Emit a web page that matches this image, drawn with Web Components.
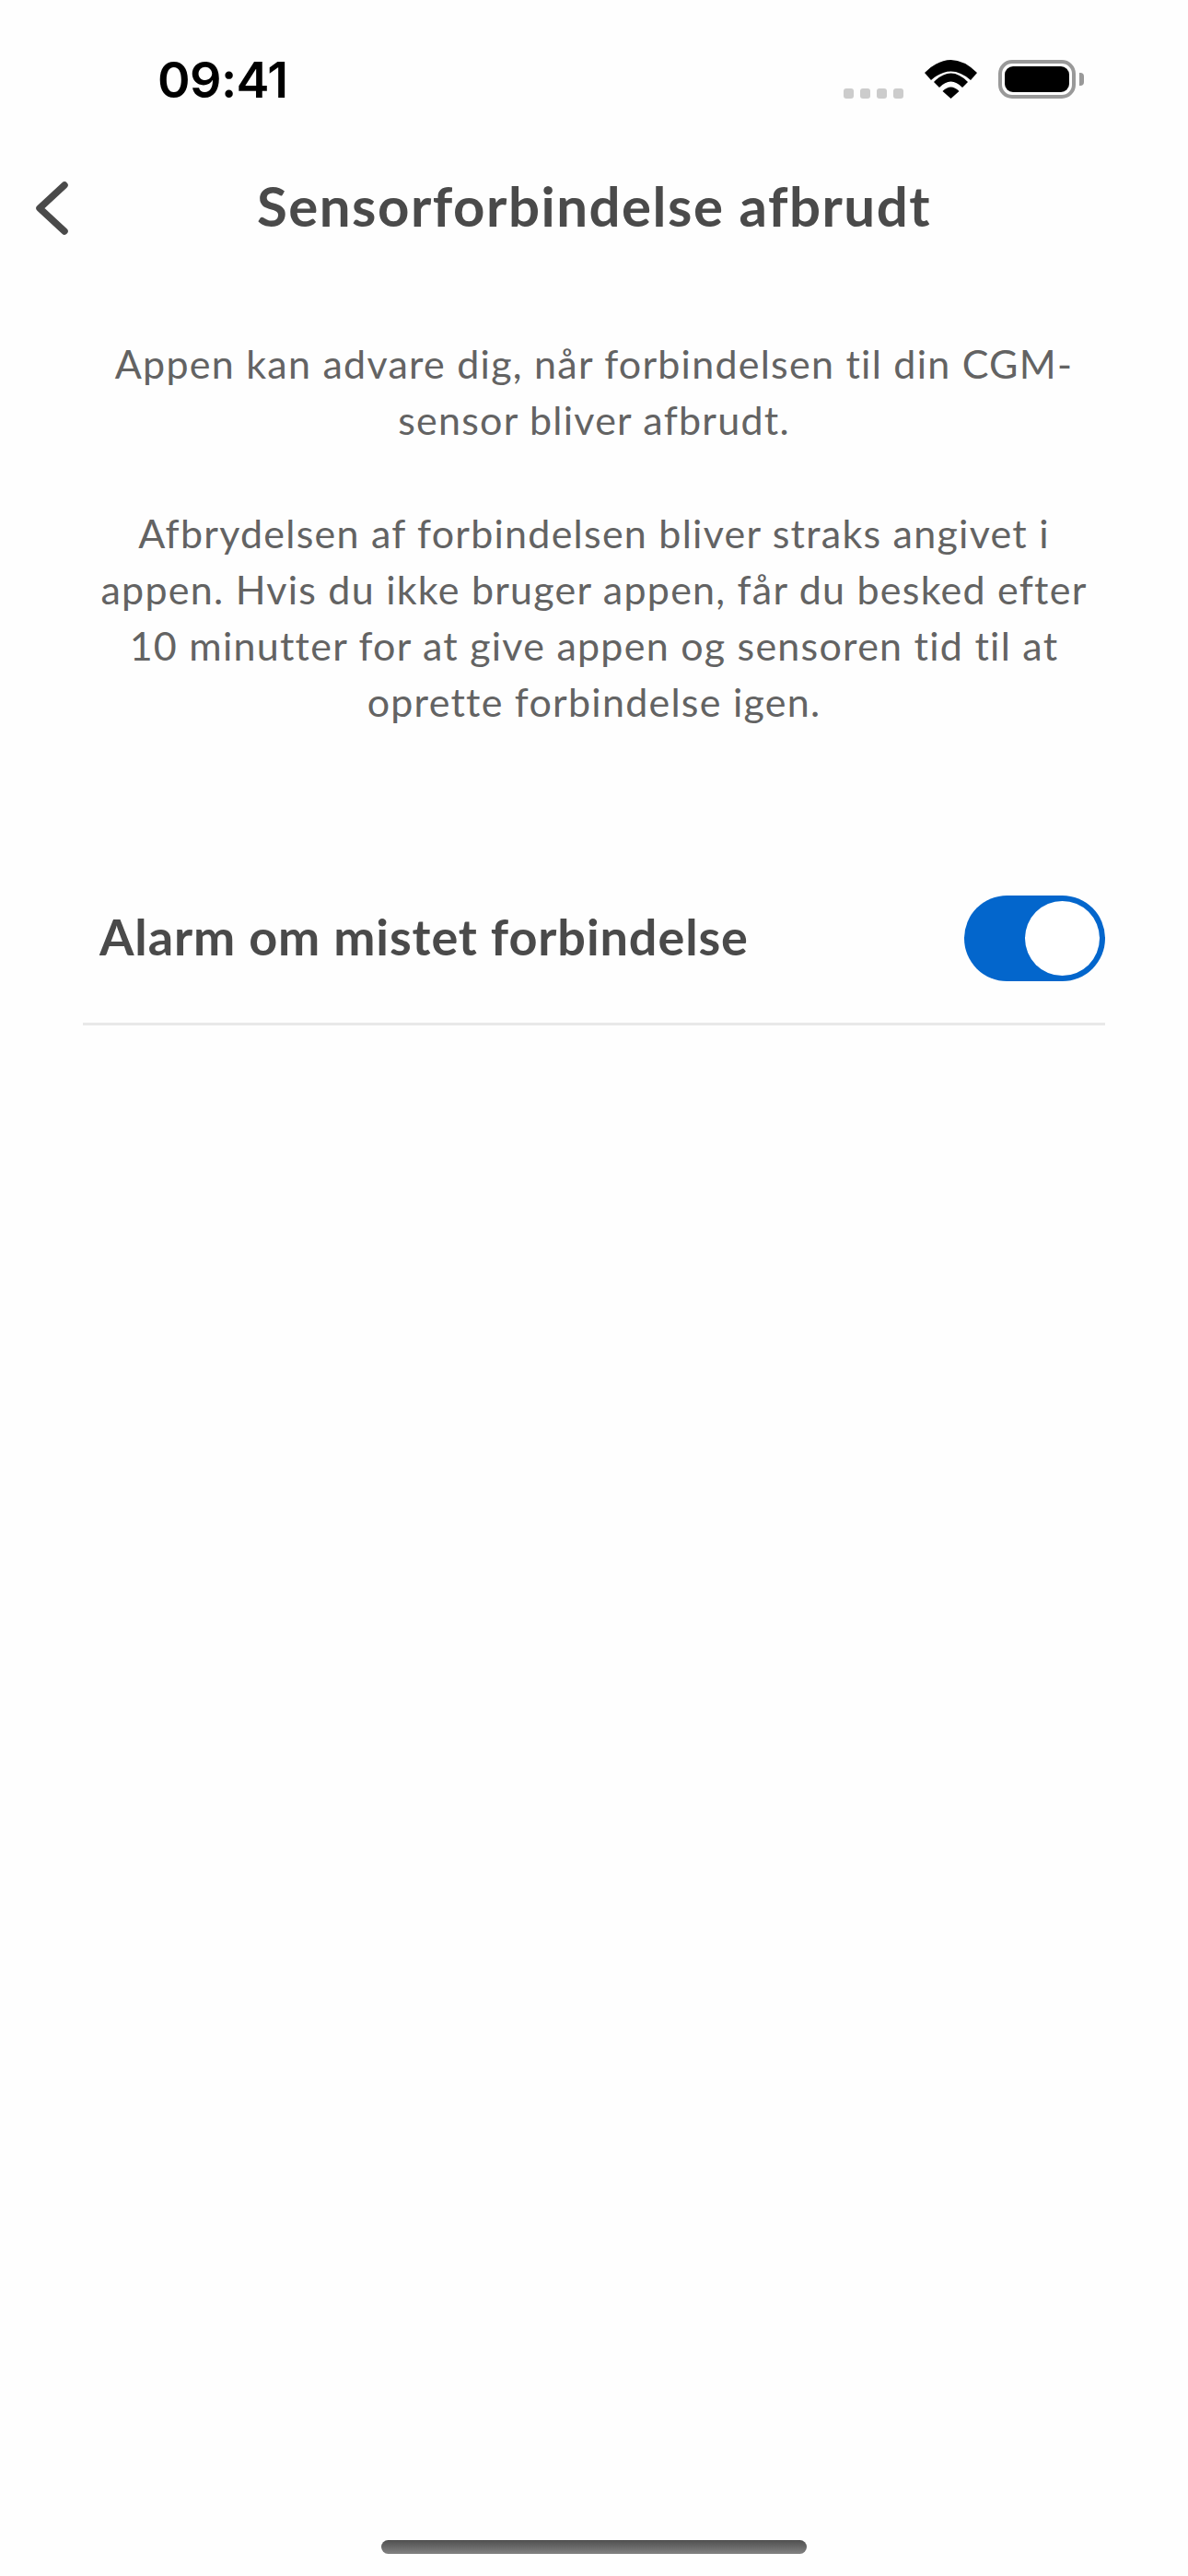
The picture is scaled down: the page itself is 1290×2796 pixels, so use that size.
<!DOCTYPE html>
<html lang="da">
<head>
<meta charset="utf-8">
<title>Sensorforbindelse afbrudt</title>
<style>
  html, body { margin: 0; padding: 0; background: #fefefe; }
  body { font-family: "Lato", "Noto Sans", sans-serif; }
</style>
</head>
<body>

<app-screen>
  <status-bar time="09:41"></status-bar>
  <nav-bar>Sensorforbindelse afbrudt</nav-bar>
  <info-text>
    Appen kan advare dig, når forbindelsen til din CGM-<br>sensor bliver afbrudt.<br><br>
    Afbrydelsen af forbindelsen bliver straks angivet i<br>appen. Hvis du ikke bruger appen, får du besked efter<br>10 minutter for at give appen og sensoren tid til at<br>oprette forbindelse igen.
  </info-text>
  <toggle-row>Alarm om mistet forbindelse</toggle-row>
  <home-indicator></home-indicator>
</app-screen>

<script>
// AppScreen.js - page column, home indicator is pushed to the bottom
class AppScreen extends HTMLElement {
  constructor() {
    super();
    this.shadow = this.attachShadow({ mode: 'open' });
    this.shadow.innerHTML = `
      <style>
        :host { display: flex; flex-direction: column; height: 2796px; background: #fefefe; overflow: hidden; }
      </style>
      <slot></slot>
    `;
  }
}

// StatusBar.js
class StatusBar extends HTMLElement {
  constructor() {
    super();
    this.shadow = this.attachShadow({ mode: 'open' });
    this.shadow.innerHTML = `
      <style>
        :host { display: flex; height: 161px; box-sizing: border-box; padding: 60px 113px 54px 171px; justify-content: space-between; align-items: flex-end; }
        .time { font: 600 54px/40px "Inter", "Liberation Sans", sans-serif; color: #000; letter-spacing: -0.6px; }
        .icons { display: flex; align-items: flex-end; }
        .dots { display: flex; gap: 7px; margin-right: 23px; }
        .dots i { width: 11px; height: 11px; border-radius: 3px; background: #ccc; }
        svg { display: block; }
        .wifi { margin-right: 23px; }
        .battery { box-sizing: border-box; width: 84px; height: 42px; border: 4px solid #999; border-radius: 15px; padding: 3px; }
        .battery i { display: block; height: 100%; background: #000; border-radius: 9px; }
        .nub { width: 5px; height: 14px; margin: 0 0 14px 4px; background: #999; border-radius: 0 4px 4px 0; }
      </style>
      <span class="time"></span>
      <div class="icons">
        <div class="dots"><i></i><i></i><i></i><i></i></div>
        <svg class="wifi" width="57" height="42" viewBox="0 0 57 42" fill="#000">
          <path d="M0 14Q28.5-14 57 14L50 22Q28.5 3 7 22Z"/>
          <path d="M10 24Q28.5 5 47 24L41 30Q28.5 17 16 30Z"/>
          <path d="M19.5 34Q28.5 25 37.5 34L28.5 42Z"/>
        </svg>
        <div class="battery"><i></i></div>
        <div class="nub"></div>
      </div>
    `;
  }
  connectedCallback() {
    this.shadow.querySelector('.time').textContent = this.getAttribute('time');
  }
}

// NavBar.js
class NavBar extends HTMLElement {
  constructor() {
    super();
    this.shadow = this.attachShadow({ mode: 'open' });
    this.shadow.innerHTML = `
      <style>
        :host { display: grid; grid-template-columns: 1fr auto 1fr; align-items: center; height: 130px; padding-left: 37px; color: #4a4a4a; }
        .title { font: 700 60px/1.2 "Lato", "Noto Sans", sans-serif; letter-spacing: 1.5px; padding: 0 37px 7px 0; }
        svg { display: block; }
      </style>
      <svg width="40" height="64" viewBox="0 0 40 64" fill="none" stroke="#4a4a4a" stroke-width="7.5" stroke-linecap="round" stroke-linejoin="round">
        <path d="M33 7L6 32L33 57"/>
      </svg>
      <span class="title"><slot></slot></span>
    `;
  }
}

// InfoText.js
class InfoText extends HTMLElement {
  constructor() {
    super();
    this.shadow = this.attachShadow({ mode: 'open' });
    this.shadow.innerHTML = `
      <style>
        :host { display: block; margin-top: 73px; text-align: center; font: 400 43px/61.2px "Lato", "Noto Sans", sans-serif; letter-spacing: 1.25px; color: #636363; white-space: nowrap; }
      </style>
      <slot></slot>
    `;
  }
}

// ToggleSwitch.js
class ToggleSwitch extends HTMLElement {
  constructor() {
    super();
    this.shadow = this.attachShadow({ mode: 'open' });
    this.shadow.innerHTML = `
      <style>
        :host { display: flex; justify-content: flex-end; box-sizing: border-box; width: 153px; height: 93px; padding: 6px; border-radius: 47px; background: #0366cc; }
        i { display: block; width: 81px; height: 81px; border-radius: 50%; background: #fff; }
      </style>
      <i></i>
    `;
  }
}

// ToggleRow.js
class ToggleRow extends HTMLElement {
  constructor() {
    super();
    this.shadow = this.attachShadow({ mode: 'open' });
    this.shadow.innerHTML = `
      <style>
        :host { display: flex; justify-content: space-between; align-items: center; box-sizing: border-box; height: 188px; margin: 132.6px 90px 0; padding: 2px 0 0 18px; border-bottom: 3px solid #e8e8e8; }
        .label { font: 700 54px/1.2 "Lato", "Noto Sans", sans-serif; letter-spacing: 0.9px; color: #4a4a4a; padding-bottom: 2px; }
      </style>
      <span class="label"><slot></slot></span>
      <toggle-switch></toggle-switch>
    `;
  }
}

// HomeIndicator.js
class HomeIndicator extends HTMLElement {
  constructor() {
    super();
    this.shadow = this.attachShadow({ mode: 'open' });
    this.shadow.innerHTML = `
      <style>
        :host { display: block; align-self: center; width: 462px; height: 15px; margin-top: auto; margin-bottom: 24px; border-radius: 8px; background: linear-gradient(#4f4f4f, #828282); }
      </style>
    `;
  }
}

customElements.define('app-screen', AppScreen);
customElements.define('status-bar', StatusBar);
customElements.define('nav-bar', NavBar);
customElements.define('info-text', InfoText);
customElements.define('toggle-switch', ToggleSwitch);
customElements.define('toggle-row', ToggleRow);
customElements.define('home-indicator', HomeIndicator);
</script>
</body>
</html>
